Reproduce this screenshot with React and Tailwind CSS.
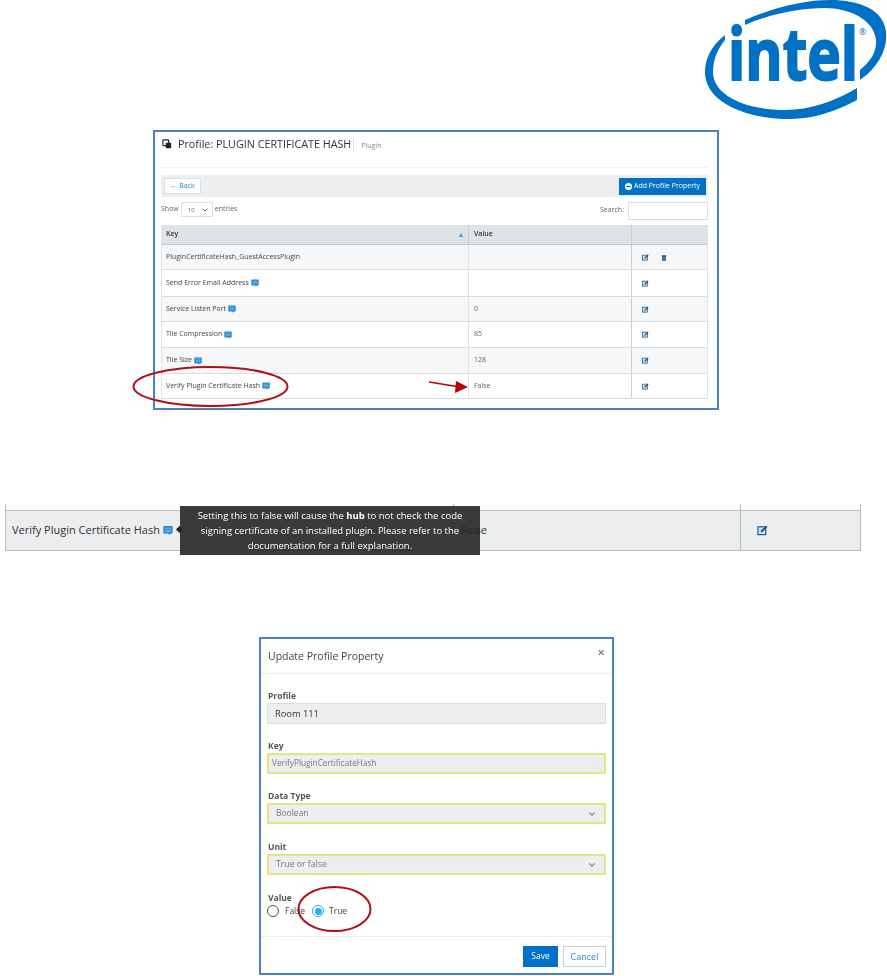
import { ChevronDown } from 'lucide-react';

const rows = [
    { key: 'PluginCertificateHash_GuestAccessPlugin', value: '', h: 'h-[25px]', bg: 'bg-[#f6f7f9]', trash: true },
    { key: 'Send Error Email Address', value: '', h: 'h-[27px]', bg: 'bg-white', note: true },
    { key: 'Service Listen Port', value: '0', h: 'h-[25px]', bg: 'bg-[#f6f7f9]', note: true },
    { key: 'Tile Compression', value: '85', h: 'h-[26px]', bg: 'bg-white', note: true },
    { key: 'Tile Size', value: '128', h: 'h-[26px]', bg: 'bg-[#f6f7f9]', note: true },
    { key: 'Verify Plugin Certificate Hash', value: 'False', h: 'h-[25px]', bg: 'bg-white', note: true },
];

const NoteIcon = ({ className }) => (
    <svg viewBox="0 0 10 10" className={className}>
        <path d="M1 .5h8a.6.6 0 0 1 .6.6v6.400a.6.6 0 0 1-.6.6H7.400L6 9.800 5.400 8.100H1a.6.6 0 0 1-.6-.6V1.100A.6.6 0 0 1 1 .5z" fill="#2385d6" />
        <path d="M2 2.600h6M2 4.300h6M2 6h6" stroke="#9ccbf0" strokeWidth="0.7" />
    </svg>
);

const EditIcon = ({ className }) => (
    <svg viewBox="0 0 12 12" className={className}>
        <rect x="1" y="2" width="8.500" height="8.500" fill="#cfe0ee" stroke="#1d5c8f" strokeWidth="1.300" />
        <path d="M4 8l.5-2L10 .8l1.300 1.300L5.900 7.500z" fill="#164d7c" />
    </svg>
);

const TrashIcon = ({ className }) => (
    <svg viewBox="0 0 10 12" className={className}>
        <path d="M1 1.500h8v1.200H1zM1.500 3h7v8.500h-7z" fill="#1d5c8f" />
        <path d="M3.500 4.500v5.500M6.500 4.500v5.500" stroke="#a9c4da" strokeWidth="0.8" />
    </svg>
);

const Logo = () => (
    <svg viewBox="690 0 197 130" className="w-[197px] h-[130px] shrink-0">
        <path d="M745 20C775 7 805 0 830 0C860 0 884 10 886 32C888 52 875 70 860 80L860 70C870 62 877 52 876 40C874 20 850 8 825 8C800 8 770 14 745 25Z" fill="#0071c5" />
        <path d="M725 35C712 45 705 58 705 72C705 102 745 119 790 119C815 119 838 110 857 100L857 88C835 101 810 110 785 110C745 110 713 95 713 72C713 60 717 50 725 40Z" fill="#0071c5" />
        <text transform="translate(728 79.500) scale(0.8 1)" fontFamily="'Open Sans', sans-serif" fontWeight="700" fontSize="71" fill="#0071c5" stroke="#0071c5" strokeWidth="2">intel</text>
        <text x="859" y="35" fontFamily="'Open Sans', sans-serif" fontSize="9" fill="#0071c5">®</text>
    </svg>
);

const ProfileShot = () => (
    <div className="ml-[153px] w-[566px] h-[280px] border-2 border-[#4f81bd] pl-[6px] pr-[9px] text-[7px] text-[#444] blur-[0.3px]">
        {/* Title */}
        <div className="h-[36px] flex items-start pt-[5px] border-b border-[#f1f1f1]">
            <svg viewBox="0 0 12 12" className="w-[10px] h-[10px] mt-[2px] ml-[1px] mr-[6px]">
                <rect x="1" y="1" width="7" height="7" rx="1" fill="none" stroke="#222" strokeWidth="1.400" />
                <rect x="4.500" y="4.500" width="6.500" height="6.500" rx="1" fill="#222" />
            </svg>
            <span className="text-[10.750px] leading-[14px] text-[#333]">Profile: PLUGIN CERTIFICATE HASH</span>
            <span className="ml-[2px] mt-[1px] h-[13px] border-l border-[#ddd] pl-[7px] text-[#888] leading-[15px]">Plugin</span>
        </div>
        {/* Toolbar */}
        <div className="mt-[7px] h-[22px] bg-[#eceef0] flex items-center justify-between pl-[3px] pr-[2px]">
            <div className="w-[37px] h-[16px] bg-white border border-[#dcdfe2] text-[#2f86cc] flex items-center justify-center">← Back</div>
            <div className="w-[87px] h-[17px] bg-[#0071c5] text-white flex items-center justify-center gap-[2px]">
                <svg viewBox="0 0 10 10" className="w-[7px] h-[7px]">
                    <circle cx="5" cy="5" r="5" fill="#fff" />
                    <rect x="2" y="4" width="6" height="2" fill="#0071c5" />
                </svg>
                Add Profile Property
            </div>
        </div>
        {/* Length and search */}
        <div className="mt-[5px] h-[23px] flex justify-between text-[#666]">
            <div className="flex items-start gap-[2px] leading-[14px]">
                <span>Show</span>
                <div className="w-[32px] h-[15px] border border-[#dcdfe2] flex items-center justify-between pl-[6px] pr-[3px] text-[6px]">
                    10
                    <ChevronDown className="w-[8px] h-[8px]" strokeWidth={3} />
                </div>
                <span>entries</span>
            </div>
            <div className="flex items-start gap-[4px]">
                <span className="mt-[3px]">Search:</span>
                <div className="w-[80px] h-[18px] bg-white border border-[#dcdfe2]"></div>
            </div>
        </div>
        {/* Table */}
        <div className="border-x border-[#dfe3e6]">
            <div className="h-[20px] flex bg-[#e0e3e5] border-b border-[#c5cacd] font-semibold text-[#333]">
                <div className="w-[306px] pl-[4px] pr-[5px] flex items-center justify-between">
                    Key
                    <span className="w-0 h-0 border-x-[2.500px] border-x-transparent border-b-[4px] border-b-[#1aa7e8]"></span>
                </div>
                <div className="w-[163px] pl-[5px] flex items-center border-l border-[#c9ced1]">Value</div>
                <div className="flex-1 border-l border-[#c9ced1]"></div>
            </div>
            {rows.map((row) => (
                <div key={row.key} className={`${row.h} ${row.bg} flex border-b border-[#d9dde0]`}>
                    <div className="w-[306px] pl-[4px] flex items-center gap-[2px]">
                        {row.key}
                        {row.note && <NoteIcon className="w-[8px] h-[8px]" />}
                    </div>
                    <div className="w-[163px] pl-[5px] flex items-center border-l border-[#dfe3e6] text-[#666]">{row.value}</div>
                    <div className="flex-1 pl-[10px] flex items-center gap-[12px] border-l border-[#c9ced1]">
                        <EditIcon className="w-[7px] h-[7px]" />
                        {row.trash && <TrashIcon className="w-[6px] h-[7px]" />}
                    </div>
                </div>
            ))}
        </div>
    </div>
);

const TooltipShot = () => (
    <div className="relative mt-[94px] ml-[5px] w-[856px] h-[47px] pt-[6px] blur-[0.2px]">
        <div className="h-full flex bg-[#ecedef] border-y border-[#b9bfc3] border-r-0 text-[11px] text-[#333]">
            <div className="w-[448px] pl-[7px] flex items-center gap-[3px]">
                Verify Plugin Certificate Hash
                <NoteIcon className="w-[10px] h-[11px]" />
            </div>
            <div className="w-[287px] pl-[7px] flex items-center border-l border-[#b9bfc3]">False</div>
            <div className="flex-1 pl-[16px] flex items-center border-l border-[#b4bbbe]">
                <EditIcon className="w-[11px] h-[11px]" />
            </div>
        </div>
        <div className="absolute left-0 top-0 h-full border-l border-[#b4bbbe]"></div>
        <div className="absolute left-[448px] top-0 h-[6px] border-l border-[#b4bbbe]"></div>
        <div className="absolute left-[735px] top-0 h-[6px] border-l border-[#b4bbbe]"></div>
        <div className="absolute right-0 top-0 h-full border-l border-[#b4bbbe]"></div>
        {/* Tooltip */}
        <div className="absolute left-[172px] top-[23px] w-[5px] h-[5px] rotate-45 bg-[#262626]"></div>
        <div className="absolute left-[175px] top-[2px] w-[300px] h-[49px] bg-[#262626]/90 text-white text-[9.500px] leading-[15px] pt-[2px] text-center">
            Setting this to false will cause the <span className="font-bold">hub</span> to not check the code<br />
            signing certificate of an installed plugin. Please refer to the<br />
            documentation for a full explanation.
        </div>
    </div>
);

const Field = ({ label, value, select, locked, mt, size, pad }) => (
    <div className={mt}>
        <div className="pl-[1px] text-[8.500px] leading-[10px] font-bold text-[#555]">{label}</div>
        <div className={`mt-[2px] h-[21px] flex items-center justify-between rounded-[1px] pr-[7px] ${pad} ${size} ${locked ? 'border bg-[#eeeeee] border-[#dcdcdc] text-[#333]' : 'border-2 bg-[#edeef0] border-[#dfe77f] text-[#777]'}`}>
            {value}
            {select && <ChevronDown className="w-[10px] h-[10px] text-[#666]" strokeWidth={2.500} />}
        </div>
    </div>
);

const ModalShot = () => (
    <div className="mt-[86px] ml-[259px] w-[355px] h-[338px] border-2 border-[#4f81bd] flex flex-col blur-[0.2px]">
        <div className="h-[35px] px-[7px] flex justify-between border-b border-[#ececec]">
            <span className="mt-[9px] text-[10.500px] leading-[16px] text-[#444]">Update Profile Property</span>
            <span className="mt-[7px] text-[13px] leading-[12px] font-bold text-[#888]">×</span>
        </div>
        <div className="px-[6px] flex-1">
            <Field mt="mt-[17px]" label="Profile" value="Room 111" locked size="text-[9.300px]" pad="pl-[7px]" />
            <Field mt="mt-[17px]" label="Key" value="VerifyPluginCertificateHash" size="text-[8.250px]" pad="pl-[3px]" />
            <Field mt="mt-[17px]" label="Data Type" value="Boolean" select size="text-[8.500px]" pad="pl-[7px]" />
            <Field mt="mt-[18px]" label="Unit" value="True or false" select size="text-[8.700px]" pad="pl-[7px]" />
            <div className="mt-[18px] pl-[1px] text-[8.500px] leading-[10px] font-bold text-[#555]">Value</div>
            <div className="mt-[2px] flex items-center text-[8.500px] text-[#444]">
                <span className="w-[12px] h-[12px] rounded-full border border-[#555] bg-white"></span>
                <span className="ml-[6px] w-[27px]">False</span>
                <span className="w-[12px] h-[12px] rounded-full border border-[#29b0f0] flex items-center justify-center">
                    <span className="w-[7px] h-[7px] rounded-full bg-[#29b0f0]"></span>
                </span>
                <span className="ml-[5px]">True</span>
            </div>
        </div>
        <div className="h-[37px] border-t border-[#ececec] flex items-start justify-end gap-[5px] pt-[9px] pr-[6px]">
            <div className="w-[35px] h-[21px] bg-[#0071c5] text-white text-[8.500px] flex items-center justify-center">Save</div>
            <div className="w-[43px] h-[21px] bg-white border border-[#ccd0d3] text-[#2f86cc] text-[9px] flex items-center justify-center">Cancel</div>
        </div>
    </div>
);

const App = () => (
    <div className="relative w-[887px] h-[976px] overflow-hidden bg-white font-['Open_Sans',sans-serif]">
        <div className="flex justify-end h-[130px]">
            <Logo />
        </div>
        <ProfileShot />
        <TooltipShot />
        <ModalShot />
        {/* Red annotations */}
        <svg viewBox="0 0 887 976" className="absolute inset-0 w-[887px] h-[976px] pointer-events-none">
            <ellipse cx="210.500" cy="386.500" rx="77" ry="19.500" fill="none" stroke="#b30f18" strokeWidth="2" />
            <path d="M429 382L457 386.500" stroke="#c00000" strokeWidth="1.500" />
            <path d="M468 387L455 393L456 381Z" fill="#c00000" />
            <ellipse cx="334.500" cy="909" rx="36" ry="22" fill="none" stroke="#b30f18" strokeWidth="2" />
        </svg>
    </div>
);

export default App;
